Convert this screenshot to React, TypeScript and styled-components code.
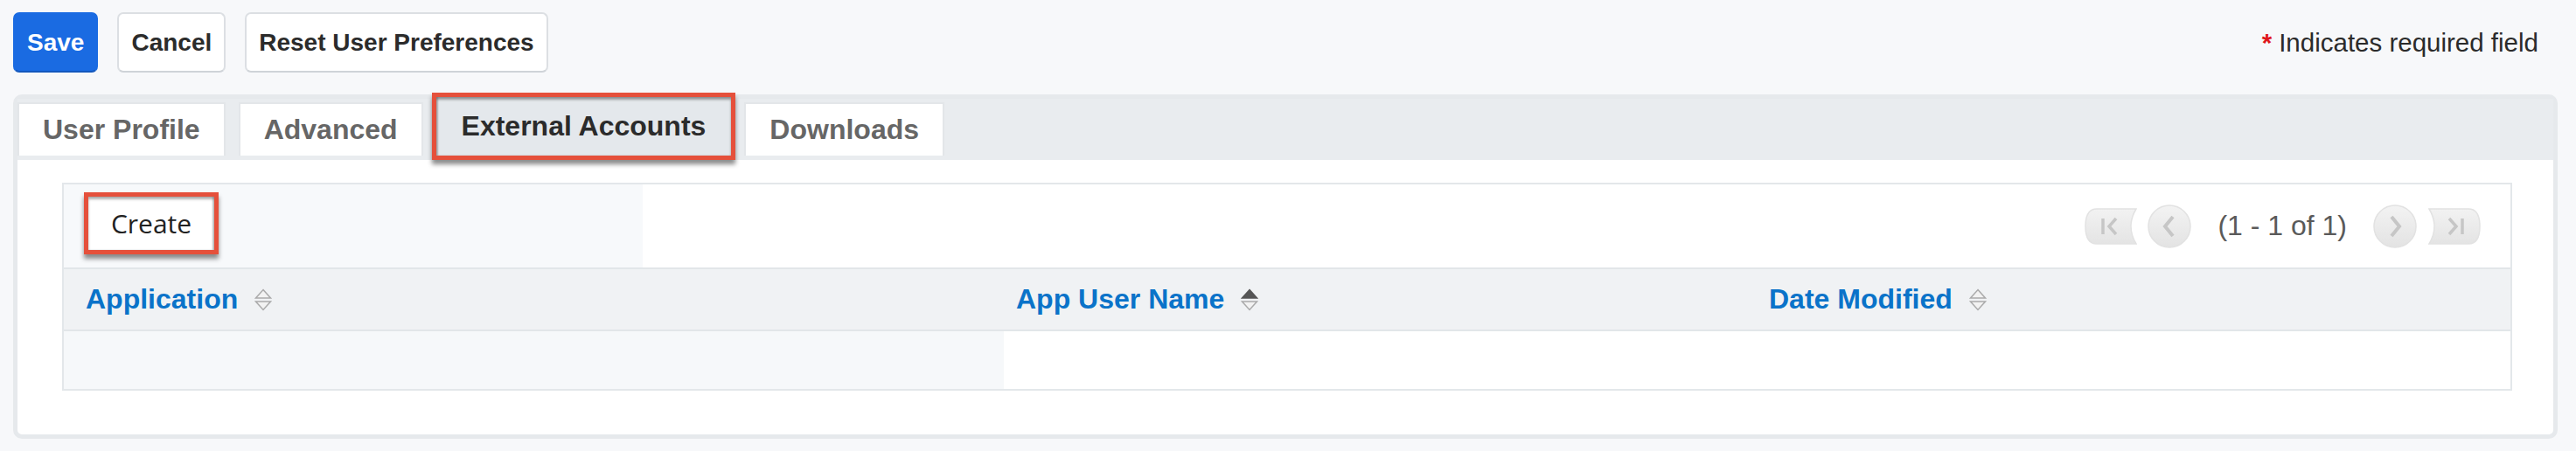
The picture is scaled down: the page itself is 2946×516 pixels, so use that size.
import styled, { createGlobalStyle } from "styled-components"

const GlobalStyle = createGlobalStyle`
body {
  margin: 0;
  background: #f7f8fa;
  font-family: "Liberation Sans", Arial, sans-serif;
}
* { box-sizing: border-box; }
`

const Page = styled.div`
width: 2946px;
height: 516px;
padding: 14px 21px 0 15px;
`

const TopBar = styled.div`
display: flex;
align-items: center;
gap: 22px;
height: 69px;
padding-right: 22px;
`

const Botao = styled.button<{ $primary?: boolean }>`
height: 69px;
padding: 0 14px;
border-radius: 7px;
font-family: "Liberation Sans", Arial, sans-serif;
font-weight: 700;
font-size: 28px;
cursor: pointer;
background: ${p => (p.$primary ? "#1a6be2" : "#fff")};
color: ${p => (p.$primary ? "#fff" : "#2b2b2b")};
border: 2px solid ${p => (p.$primary ? "#1a6be2" : "#dcdfe3")};
border-bottom-color: ${p => (p.$primary ? "#1458bd" : "#cfd3d8")};
`

const Obrigatorio = styled.span`
margin-left: auto;
font-size: 29.5px;
color: #2b2b2b;
`

const Asterisco = styled.span`
color: #e0151b;
font-weight: 700;
margin-right: 8px;
`

const Painel = styled.section`
margin-top: 25px;
height: 394px;
border: 5px solid #e6e9ec;
border-radius: 10px;
background: #fff;
display: flex;
flex-direction: column;
`

const Abas = styled.div`
display: flex;
align-items: flex-end;
gap: 15px;
background: #e9ecef;
padding: 4px 0 5px 0;
`

const Aba = styled.div<{ $ativa?: boolean }>`
display: flex;
align-items: center;
height: ${p => (p.$ativa ? "77px" : "61px")};
padding: 0 ${p => (p.$ativa ? "29px" : "27px")};
font-weight: 700;
font-size: 32px;
white-space: nowrap;
position: relative;
background: ${p => (p.$ativa ? "#e4e8ec" : "#fff")};
color: ${p => (p.$ativa ? "#2b2b2b" : "#666")};
border: ${p => (p.$ativa ? "5px solid #e5503b" : "2px solid #e3e6e9")};
${p => (p.$ativa ? "" : "border-bottom: none;")}
margin: ${p => (p.$ativa ? "-11px -5px -5px -5px" : "0")};
z-index: ${p => (p.$ativa ? 2 : 0)};
box-shadow: ${p =>
    p.$ativa
      ? "0 5px 5px rgba(0,0,0,0.45), inset 0 3px 3px rgba(0,0,0,0.35), inset 2px 0 2px rgba(0,0,0,0.2)"
      : "none"};
`

const Conteudo = styled.div`
flex: 1;
padding: 26px 47px 0 51px;
`

const Lista = styled.div`
border: 2px solid #e3e7ea;
background: #fff;
`

const BarraLista = styled.div`
display: grid;
grid-template-columns: 662px 1fr;
height: 95px;
`

const BarraEsquerda = styled.div`
background: #f7f9fb;
padding: 9px 0 0 23px;
`

const BotaoCriar = styled.button`
width: 154px;
height: 71px;
border: 5px solid #e5503b;
background: #fff;
font-family: "Open Sans", "Liberation Sans", sans-serif;
font-size: 30px;
color: #222;
box-shadow: 0 5px 5px rgba(0,0,0,0.45), inset 0 3px 3px rgba(0,0,0,0.3), inset -2px 0 2px rgba(0,0,0,0.2);
`

const Paginacao = styled.div`
display: flex;
align-items: center;
justify-content: flex-end;
padding-right: 34px;
`

const TextoPaginas = styled.span`
font-size: 32px;
color: #5a5a5a;
margin: 0 30px;
`

const Linha = styled.div<{ $cabecalho?: boolean }>`
display: grid;
grid-template-columns: 1075px 862px 1fr;
height: ${p => (p.$cabecalho ? "73px" : "66px")};
background: ${p => (p.$cabecalho ? "#f0f2f4" : "#fff")};
border-top: ${p => (p.$cabecalho ? "2px solid #e2e6e9" : "none")};
border-bottom: ${p => (p.$cabecalho ? "2px solid #e2e6e9" : "none")};
`

const Celula = styled.div<{ $recuo: number; $fundo?: string }>`
display: flex;
align-items: center;
gap: 19px;
padding-left: ${p => p.$recuo}px;
background: ${p => p.$fundo || "transparent"};
`

const Titulo = styled.span`
font-weight: 700;
font-size: 32px;
color: #0a73c9;
`

function Ordenar({ ativo }: { ativo?: boolean }) {
  return (
    <svg width="20" height="26" viewBox="0 0 20 26">
      <polygon
        points="10,1.5 18.5,11 1.5,11"
        fill={ativo ? "#555" : "#f2f2f2"}
        stroke={ativo ? "#555" : "#aaa"}
        strokeWidth="1.5"
      />
      <polygon points="1.5,15 18.5,15 10,24.5" fill="#f2f2f2" stroke="#aaa" strokeWidth="1.5" />
    </svg>
  )
}

function BotaoPonta({ lado }: { lado: "inicio" | "fim" }) {
  const inicio = lado === "inicio"
  return (
    <svg width="60" height="42" viewBox="0 0 60 42" style={{ transform: inicio ? "none" : "scaleX(-1)" }}>
      <defs>
        <linearGradient id={"gp" + lado} x1="0" y1="0" x2="0" y2="1">
          <stop offset="0" stopColor="#f2f2f2" />
          <stop offset="1" stopColor="#e4e4e4" />
        </linearGradient>
      </defs>
      <path
        d="M14 1 H59 Q47 21 59 41 H14 Q1 41 1 21 Q1 1 14 1 Z"
        fill={"url(#gp" + lado + ")"}
        stroke="#e2e2e2"
        strokeWidth="1.5"
      />
      <path d="M21 12 V30 M36 12 L28 21 L36 30" fill="none" stroke="#c6c6c6" strokeWidth="3.5" />
    </svg>
  )
}

function BotaoRedondo({ lado }: { lado: "ant" | "prox" }) {
  return (
    <svg width="50" height="50" viewBox="0 0 50 50" style={{ transform: lado === "ant" ? "none" : "scaleX(-1)" }}>
      <defs>
        <linearGradient id={"gr" + lado} x1="0" y1="0" x2="0" y2="1">
          <stop offset="0" stopColor="#f3f3f3" />
          <stop offset="1" stopColor="#e3e3e3" />
        </linearGradient>
      </defs>
      <circle cx="25" cy="25" r="24" fill={"url(#gr" + lado + ")"} stroke="#e2e2e2" strokeWidth="1.5" />
      <path d="M29 14 L20 25 L29 36" fill="none" stroke="#c6c6c6" strokeWidth="4" />
    </svg>
  )
}

export default function App() {
  return (
    <Page>
      <GlobalStyle />
      <TopBar>
        <Botao $primary>Save</Botao>
        <Botao>Cancel</Botao>
        <Botao>Reset User Preferences</Botao>
        <Obrigatorio>
          <Asterisco>*</Asterisco>Indicates required field
        </Obrigatorio>
      </TopBar>
      <Painel>
        <Abas>
          <Aba>User Profile</Aba>
          <Aba>Advanced</Aba>
          <Aba $ativa>External Accounts</Aba>
          <Aba>Downloads</Aba>
        </Abas>
        <Conteudo>
          <Lista>
            <BarraLista>
              <BarraEsquerda>
                <BotaoCriar>Create</BotaoCriar>
              </BarraEsquerda>
              <Paginacao>
                <BotaoPonta lado="inicio" />
                <span style={{ width: 12 }} />
                <BotaoRedondo lado="ant" />
                <TextoPaginas>(1 - 1 of 1)</TextoPaginas>
                <BotaoRedondo lado="prox" />
                <span style={{ width: 13 }} />
                <BotaoPonta lado="fim" />
              </Paginacao>
            </BarraLista>
            <Linha $cabecalho>
              <Celula $recuo={25}>
                <Titulo>Application</Titulo>
                <Ordenar />
              </Celula>
              <Celula $recuo={14}>
                <Titulo>App User Name</Titulo>
                <Ordenar ativo />
              </Celula>
              <Celula $recuo={13}>
                <Titulo>Date Modified</Titulo>
                <Ordenar />
              </Celula>
            </Linha>
            <Linha>
              <Celula $recuo={0} $fundo="#f6f8fa" />
              <Celula $recuo={0} />
              <Celula $recuo={0} />
            </Linha>
          </Lista>
        </Conteudo>
      </Painel>
    </Page>
  )
}
